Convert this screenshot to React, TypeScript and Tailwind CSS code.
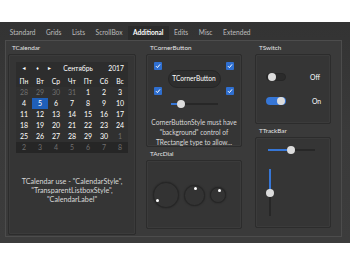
import type { ReactNode } from 'react'

const font = { fontFamily: 'Lato, "Noto Sans", sans-serif' }

const tabs = ['Standard', 'Grids', 'Lists', 'ScrollBox', 'Additional', 'Edits', 'Misc', 'Extended']
const dayNames = ['Пн', 'Вт', 'Ср', 'Чт', 'Пт', 'Сб', 'Вс']

// [day, muted]
const weeks: [number, boolean][][] = [
  [[28, true], [29, true], [30, true], [31, true], [1, false], [2, false], [3, false]],
  [[4, false], [5, false], [6, false], [7, false], [8, false], [9, false], [10, false]],
  [[11, false], [12, false], [13, false], [14, false], [15, false], [16, false], [17, false]],
  [[18, false], [19, false], [20, false], [21, false], [22, false], [23, false], [24, false]],
  [[25, false], [26, false], [27, false], [28, false], [29, false], [30, false], [1, true]],
  [[2, true], [3, true], [4, true], [5, true], [6, true], [7, true], [8, true]],
]

function Group({ label, className, children }: { label: string; className: string; children: ReactNode }) {
  return (
    <div className="flex flex-col">
      <div className="flex h-[13px] items-end pb-[3px] pl-[4px] text-[6.3px] leading-none text-[#e6e6e6]">{label}</div>
      <div className={`rounded-[2px] border border-[#2c2c2c] bg-[#353535] shadow-[inset_0_0_0_1px_rgba(255,255,255,0.03)] ${className}`}>
        {children}
      </div>
    </div>
  )
}

function Check() {
  return (
    <div className="flex h-[8px] w-[8px] items-center justify-center rounded-[1px] bg-[#2f6fd0]">
      <svg width="6" height="6" viewBox="0 0 6 6">
        <path d="M1 3.2 L2.4 4.6 L5 1.4" stroke="white" strokeWidth="1" fill="none" />
      </svg>
    </div>
  )
}

function Switch({ on }: { on: boolean }) {
  return (
    <div
      className={`relative h-[8px] w-[20px] rounded-full ${
        on ? 'bg-[#3676d6]' : 'border border-[#262626] bg-[#2b2b2b]'
      }`}
    >
      <div
        className={`absolute top-1/2 h-[8px] w-[8px] -translate-y-1/2 rounded-full bg-[#dcdcdc] ${
          on ? 'right-[1px]' : 'left-[1px]'
        }`}
      />
    </div>
  )
}

function Dial({ size, dx, dy }: { size: number; dx: number; dy: number }) {
  return (
    <div
      className="relative rounded-full border border-[#262626] bg-[#333] shadow-[0_0_2px_rgba(0,0,0,0.4)]"
      style={{ width: size, height: size }}
    >
      <div
        className="absolute h-[3px] w-[3px] rounded-full bg-white"
        style={{ left: dx - 1.5, top: dy - 1.5 }}
      />
    </div>
  )
}

export default function App() {
  return (
    <div className="h-[265px] w-[350px] bg-white pt-[22px]" style={font}>
      <div className="flex h-[221px] flex-col bg-gradient-to-b from-[#333] via-[#3a3a3a] to-[#3c3c3c]">
        {/* Tabs */}
        <div className="flex h-[18px] items-end pl-[4.5px]">
          {tabs.map(t => (
            <div
              key={t}
              className={`flex h-[14px] items-center px-[5.3px] text-[6.6px] ${
                t === 'Additional' ? 'bg-[#2b2b2b] font-bold text-white' : 'text-[#bdbdbd]'
              }`}
            >
              {t}
            </div>
          ))}
        </div>

        {/* Content panel */}
        <div className="ml-[5px] flex h-[197px] w-[337px] border border-[#4c4c4c] bg-[#3a3a3a] pl-[2px]">
          {/* Calendar */}
          <Group label="TCalendar" className="flex h-[181px] w-[128px] flex-col items-center pt-[7px]">
            <div className="w-[112px] bg-[#2d2d2d] text-[6.8px] text-white">
              <div className="flex h-[13px] items-center">
                <span className="w-[16px] text-center text-[5px]">◄</span>
                <span className="w-[11px] text-center text-[5px]">♦</span>
                <span className="w-[13px] text-center text-[5px]">►</span>
                <span className="flex-1 text-center">Сентябрь</span>
                <span className="w-[28px] pr-[4px] text-right">2017</span>
              </div>
              <div className="flex h-[12px] items-center">
                {dayNames.map(d => (
                  <span key={d} className="w-[16px] text-center">{d}</span>
                ))}
              </div>
              {weeks.map((w, i) => (
                <div key={i} className={`flex h-[11px] items-center ${i === 5 ? 'bg-[#262626]' : 'bg-[#303030]'}`}>
                  {w.map(([d, muted], j) => (
                    <span
                      key={j}
                      className={`flex h-[11px] w-[16px] items-center justify-center text-[7px] ${
                        i === 1 && j === 1 ? 'bg-[#1f5fb8]' : ''
                      } ${muted ? 'text-[#6f6f6f]' : ''}`}
                    >
                      {d}
                    </span>
                  ))}
                </div>
              ))}
            </div>
            <div className="mt-[25px] whitespace-nowrap text-center text-[7.2px] leading-[8.8px] text-[#d8d8d8]">
              TCalendar use - "CalendarStyle",
              <br />
              "TransparentListboxStyle",
              <br />
              "CalendarLabel"
            </div>
          </Group>

          {/* Middle column */}
          <div className="ml-[10px] flex flex-col">
            <Group label="TCornerButton" className="flex h-[93px] w-[96px] flex-col items-center pt-[7px]">
              <div className="flex w-[80px] items-center justify-between">
                <div className="flex h-[33px] flex-col justify-between">
                  <Check />
                  <Check />
                </div>
                <div className="flex h-[18px] w-[53px] items-center justify-center rounded-full border border-[#262626] bg-[#2e2e2e] text-[6.6px] text-white">
                  TCornerButton
                </div>
                <div className="flex h-[33px] flex-col justify-between">
                  <Check />
                  <Check />
                </div>
              </div>
              <div className="relative mt-[8px] h-[2px] w-[47px] bg-[#272727]">
                <div className="h-[2px] w-[10px] bg-[#3676d6]" />
                <div className="absolute left-[6px] top-1/2 h-[8px] w-[8px] -translate-y-1/2 rounded-full bg-[#dcdcdc]" />
              </div>
              <div className="mt-[12px] whitespace-nowrap text-center text-[6.6px] leading-[10px] text-[#d8d8d8]">
                CornerButtonStyle must have
                <br />
                "background" control of
                <br />
                TRectangle type to allow...
              </div>
            </Group>
            <Group label="TArcDial" className="flex h-[69px] w-[96px] items-center gap-[5px] pl-[6px] pt-[1px]">
              <Dial size={26} dx={3} dy={17} />
              <Dial size={21} dx={10} dy={3} />
              <Dial size={16} dx={8} dy={2} />
            </Group>
          </div>

          {/* Right column */}
          <div className="ml-[13px] flex flex-col">
            <Group label="TSwitch" className="flex h-[70px] w-[76px] flex-col gap-[14px] pl-[10px] pt-[17px] text-[6.8px] text-white">
              <div className="flex items-center">
                <Switch on={false} />
                <span className="ml-[24px]">Off</span>
              </div>
              <div className="flex items-center">
                <Switch on />
                <span className="ml-[26px]">On</span>
              </div>
            </Group>
            <Group label="TTrackBar" className="flex h-[91px] w-[76px] flex-col pl-[12px] pt-[11px]">
              <div className="relative h-[2px] w-[47px] bg-[#272727]">
                <div className="h-[2px] w-[23px] bg-[#3676d6]" />
                <div className="absolute left-[19px] top-1/2 h-[8px] w-[8px] -translate-y-1/2 rounded-full bg-[#dcdcdc]" />
              </div>
              <div className="relative ml-[1px] mt-[18px] h-[47px] w-[2px] bg-[#272727]">
                <div className="h-[24px] w-[2px] bg-[#3676d6]" />
                <div className="absolute left-1/2 top-[20px] h-[8px] w-[8px] -translate-x-1/2 rounded-full bg-[#dcdcdc]" />
              </div>
            </Group>
          </div>
        </div>
      </div>
    </div>
  )
}
